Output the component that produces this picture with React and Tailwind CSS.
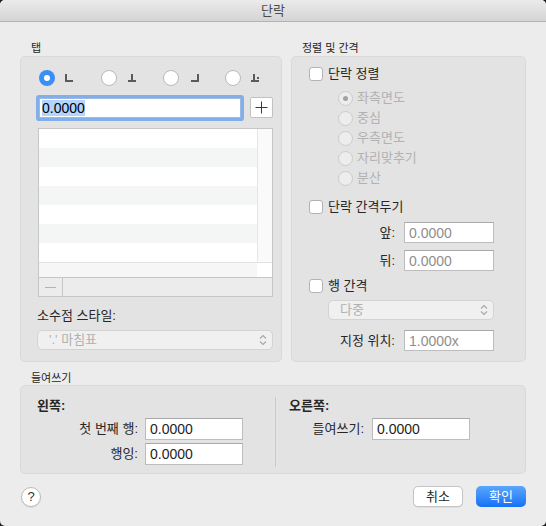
import React from 'react';

const FONT = { fontFamily: '"Liberation Sans", "Noto Sans CJK KR", sans-serif' };

function TabIcon({ kind }) {
  return (
    <svg width="10" height="10" viewBox="0 0 10 10" className="shrink-0">
      {kind === 'left' && <path d="M1 1V8H8" fill="none" stroke="#5a5a5a" strokeWidth="2" />}
      {kind === 'center' && <path d="M5 1V8M1 8H9" fill="none" stroke="#5a5a5a" strokeWidth="2" />}
      {kind === 'right' && <path d="M9 1V8H2" fill="none" stroke="#5a5a5a" strokeWidth="2" />}
      {kind === 'decimal' && (
        <>
          <path d="M3 1V8M0 8H8" fill="none" stroke="#5a5a5a" strokeWidth="2" />
          <rect x="6" y="4" width="2" height="2" fill="#5a5a5a" />
        </>
      )}
    </svg>
  );
}

function TabRadio({ selected, kind }) {
  return (
    <div className="flex items-center gap-[10px]">
      {selected ? (
        <div className="w-4 h-4 rounded-full bg-[#3b8ef6] flex items-center justify-center">
          <div className="w-[6px] h-[6px] rounded-full bg-white" />
        </div>
      ) : (
        <div className="w-4 h-4 rounded-full bg-white border border-[#b9b9b9]" />
      )}
      <TabIcon kind={kind} />
    </div>
  );
}

function Checkbox({ label }) {
  return (
    <div className="flex items-center gap-[5px] h-4">
      <div className="w-[14px] h-[14px] rounded-[3px] bg-white border border-[#b3b3b3]" />
      <span className="text-[13px] leading-4">{label}</span>
    </div>
  );
}

function DisabledRadio({ label, selected }) {
  return (
    <div className="flex items-center gap-[4px] h-5">
      <div className="w-[15px] h-[15px] rounded-full bg-[#ededed] border border-[#cbcbcb] flex items-center justify-center">
        {selected && <div className="w-[5px] h-[5px] rounded-full bg-[#a3a3a3]" />}
      </div>
      <span className="text-[13px] leading-4 text-[#b2b2b2]">{label}</span>
    </div>
  );
}

function Chevrons() {
  return (
    <svg width="8" height="12" viewBox="0 0 8 12">
      <path d="M1 4.5L4 1.5L7 4.5M1 7.5L4 10.5L7 7.5" fill="none" stroke="#a8a8a8" strokeWidth="1.2" />
    </svg>
  );
}

function Popup({ text, className }) {
  return (
    <div className={`h-5 rounded-[5px] bg-[#f0f0f0] border border-[#d3d3d3] flex items-center justify-between pl-[11px] pr-[5px] ${className}`}>
      <span className="text-[13px] leading-4 text-[#b0b0b0]">{text}</span>
      <Chevrons />
    </div>
  );
}

function Field({ value, muted, className }) {
  return (
    <div className={`h-[21px] bg-white border border-[#bdbdbd] border-t-[#a9a9a9] flex items-center pl-[4px] ${className}`}>
      <span className={`text-[14px] leading-4 ${muted ? 'text-[#8e8e8e]' : 'text-[#1e1e1e]'}`}>{value}</span>
    </div>
  );
}

function LabeledField({ label, value, labelWidth, muted, fieldWidth, gap }) {
  return (
    <div className="flex items-center">
      <div className="text-[13px] leading-4 text-right" style={{ width: labelWidth, marginRight: gap }}>{label}</div>
      <Field value={value} muted={muted} className="" />
    </div>
  );
}

export default function App() {
  const rows = [0, 1, 2, 3, 4, 5, 6];

  return (
    <div className="w-[546px] h-[526px] bg-[#1c1c1c]" style={FONT}>
      <div className="w-full h-full rounded-[5px] overflow-hidden bg-[#ececec] flex flex-col text-[#262626]">
        <div className="h-[22px] shrink-0 bg-gradient-to-b from-[#ebebeb] to-[#d4d4d4] border-b border-[#b2b2b2] flex items-center justify-center">
          <span className="text-[13px] leading-4 text-[#4a4a4a]">단락</span>
        </div>

        <div className="px-5 pt-[19px]">
          <div className="flex gap-[9px]">
            <div className="w-[262px]">
              <div className="h-[14px] pl-[11px] text-[11px] leading-[14px]">탭</div>
              <div className="mt-[1px] h-[306px] rounded-[5px] bg-[#e3e3e3] border border-[#d9d9d9]">
                <div className="pt-[13px] pl-[18px] grid grid-cols-[62px_62px_62px_62px]">
                  <TabRadio selected kind="left" />
                  <TabRadio kind="center" />
                  <TabRadio kind="right" />
                  <TabRadio kind="decimal" />
                </div>

                <div className="mt-[11px] ml-[18px] flex items-center gap-[9px]">
                  <div className="w-[202px] h-5 bg-white border border-[#9bb9e4] shadow-[0_0_0_3px_#82aeea] rounded-[1px] flex items-center pl-[2px]">
                    <span className="text-[14px] leading-4 bg-[#b3d4fc] text-black">0.0000</span>
                  </div>
                  <div className="w-[23px] h-[21px] bg-white border border-[#c1c1c1] rounded-[2px] flex items-center justify-center">
                    <svg width="13" height="13" viewBox="0 0 13 13">
                      <path d="M6.5 0.5V12.5M0.5 6.5H12.5" stroke="#3a3a3a" strokeWidth="1" />
                    </svg>
                  </div>
                </div>

                <div className="mt-[10px] ml-[17px] w-[235px] h-[169px] border border-[#c6c6c6] bg-white flex flex-col">
                  <div className="flex">
                    <div className="flex-1 flex flex-col">
                      {rows.map((r) => (
                        <div key={r} className={`h-[19px] ${r % 2 === 1 ? 'bg-[#f4f5f5]' : 'bg-white'}`} />
                      ))}
                    </div>
                    <div className="w-[15px] bg-[#fafafa] border-l border-[#e6e6e6]" />
                  </div>
                  <div className="h-[15px] flex border-t border-[#e2e2e2]">
                    <div className="flex-1 bg-[#f6f6f6]" />
                    <div className="w-[15px] bg-white" />
                  </div>
                  <div className="flex-1 flex bg-[#ececec] border-t border-[#c6c6c6]">
                    <div className="w-6 border-r border-[#c6c6c6] flex items-center justify-center">
                      <div className="w-[11px] h-px bg-[#b4b4b4]" />
                    </div>
                  </div>
                </div>

                <div className="mt-[11px] pl-[16px] text-[13px] leading-4">소수점 스타일:</div>
                <Popup text="'.' 마침표" className="mt-[6px] ml-[16px] w-[236px]" />
              </div>
            </div>

            <div className="w-[235px]">
              <div className="h-[14px] pl-[11px] text-[11px] leading-[14px]">정렬 및 간격</div>
              <div className="mt-[1px] h-[306px] rounded-[5px] bg-[#e3e3e3] border border-[#d9d9d9]">
                <div className="pt-[9px] pl-[17px]">
                  <Checkbox label="단락 정렬" />
                </div>
                <div className="mt-[6px] pl-[46px] flex flex-col">
                  <DisabledRadio label="좌측면도" selected />
                  <DisabledRadio label="중심" />
                  <DisabledRadio label="우측면도" />
                  <DisabledRadio label="자리맞추기" />
                  <DisabledRadio label="분산" />
                </div>
                <div className="mt-[11px] pl-[17px]">
                  <Checkbox label="단락 간격두기" />
                </div>
                <div className="mt-[7px] flex items-center">
                  <div className="w-[104px] pr-[1px] text-right text-[13px] leading-4">앞:</div>
                  <Field value="0.0000" muted className="ml-[8px] w-[90px]" />
                </div>
                <div className="mt-[7px] flex items-center">
                  <div className="w-[104px] pr-[1px] text-right text-[13px] leading-4">뒤:</div>
                  <Field value="0.0000" muted className="ml-[8px] w-[90px]" />
                </div>
                <div className="mt-[7px] pl-[17px]">
                  <Checkbox label="행 간격" />
                </div>
                <Popup text="다중" className="mt-[6px] ml-[36px] w-[166px]" />
                <div className="mt-[10px] flex items-center">
                  <div className="w-[104px] pr-[1px] text-right text-[13px] leading-4">지정 위치:</div>
                  <Field value="1.0000x" muted className="ml-[8px] w-[90px]" />
                </div>
              </div>
            </div>
          </div>

          <div className="mt-[9px] h-[14px] pl-[11px] text-[11px] leading-[14px]">들여쓰기</div>
          <div className="h-[89px] rounded-[5px] bg-[#e3e3e3] border border-[#d9d9d9] flex">
            <div className="w-[254px] pt-[12px]">
              <div className="pl-[16px] text-[13px] leading-4 font-bold">왼쪽:</div>
              <div className="mt-[4px] flex items-center">
                <div className="w-[117px] text-right text-[13px] leading-4">첫 번째 행:</div>
                <Field value="0.0000" className="ml-[7px] w-[98px] h-[22px]" />
              </div>
              <div className="mt-[3px] flex items-center">
                <div className="w-[117px] text-right text-[13px] leading-4">행잉:</div>
                <Field value="0.0000" className="ml-[7px] w-[98px] h-[22px]" />
              </div>
            </div>
            <div className="mt-[11px] w-px h-[70px] bg-[#cacaca]" />
            <div className="flex-1 pt-[12px]">
              <div className="pl-[13px] text-[13px] leading-4 font-bold">오른쪽:</div>
              <div className="mt-[4px] flex items-center">
                <div className="w-[88px] text-right text-[13px] leading-4">들여쓰기:</div>
                <Field value="0.0000" className="ml-[8px] w-[98px] h-[22px]" />
              </div>
            </div>
          </div>

          <div className="mt-[12px] flex items-center">
            <div className="ml-[1px] w-5 h-5 rounded-full bg-white border border-[#bcbcbc] shadow-[0_1px_1px_rgba(0,0,0,0.08)] flex items-center justify-center">
              <span className="text-[13px] leading-4 text-[#333]">?</span>
            </div>
            <div className="flex-1" />
            <div className="w-[50px] h-[21px] rounded-[5px] bg-white border border-[#c4c4c4] shadow-[0_1px_1px_rgba(0,0,0,0.06)] flex items-center justify-center">
              <span className="text-[13px] leading-4">취소</span>
            </div>
            <div className="ml-[13px] w-[50px] h-[21px] rounded-[5px] bg-gradient-to-b from-[#5aa6fb] to-[#1570f5] flex items-center justify-center">
              <span className="text-[13px] leading-4 text-white">확인</span>
            </div>
          </div>
        </div>
      </div>
    </div>
  );
}
